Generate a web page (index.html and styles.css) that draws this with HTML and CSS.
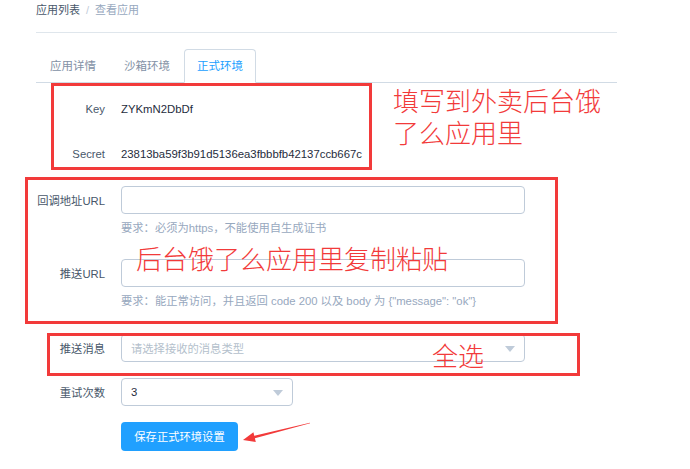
FILE: index.html
```html
<!DOCTYPE html>
<html lang="zh-CN">
<head>
<meta charset="utf-8">
<title>查看应用</title>
<link rel="stylesheet" href="styles.css">
</head>
<body>
<div class="page">
  <div class="breadcrumb">
    <span class="crumb-link">应用列表</span><span class="crumb-sep">/</span><span class="crumb-current">查看应用</span>
  </div>

  <div class="tabs">
    <div class="tab">应用详情</div>
    <div class="tab">沙箱环境</div>
    <div class="tab tab-active">正式环境</div>
  </div>

  <div class="form">
    <div class="item gap-17">
      <div class="label">Key</div>
      <div class="value">ZYKmN2DbDf</div>
    </div>
    <div class="item gap-18">
      <div class="label">Secret</div>
      <div class="value">23813ba59f3b91d5136ea3fbbbfb42137ccb667c</div>
    </div>
    <div class="item-wrap gap-23">
      <div class="item">
        <div class="label">回调地址URL</div>
        <div class="input wide"></div>
      </div>
      <div class="help">要求：必须为https，不能使用自生成证书</div>
    </div>
    <div class="item-wrap gap-24">
      <div class="item">
        <div class="label">推送URL</div>
        <div class="input wide"></div>
      </div>
      <div class="help">要求：能正常访问，并且返回 code 200 以及 body 为 {"message": "ok"}</div>
    </div>
    <div class="item gap-16">
      <div class="label">推送消息</div>
      <div class="input wide select"><span class="placeholder">请选择接收的消息类型</span><span class="caret"></span></div>
    </div>
    <div class="item gap-16">
      <div class="label">重试次数</div>
      <div class="input narrow select"><span class="select-value">3</span><span class="caret"></span></div>
    </div>
    <div class="item">
      <div class="label"></div>
      <button class="btn-primary">保存正式环境设置</button>
    </div>
  </div>
</div>

<div class="mark box-1"></div>
<div class="mark box-2"></div>
<div class="mark box-3"></div>
<div class="note note-1">填写到外卖后台饿<br>了么应用里</div>
<div class="note note-2">后台饿了么应用里复制粘贴</div>
<div class="note note-3">全选</div>
<svg class="arrow" width="75" height="30" viewBox="0 0 75 30">
  <polygon points="3,22 15.8,23.9 14.9,20.26 70.06,5.24 69.94,4.76 14.3,17.84 13.4,14.2" fill="#f23a3a"/>
</svg>
</body>
</html>
```

FILE: styles.css
```css
* { box-sizing: border-box; }

html, body {
  margin: 0;
  padding: 0;
  background: #fff;
}

body {
  width: 690px;
  height: 469px;
  position: relative;
  overflow: hidden;
  font-family: "Liberation Sans", "Noto Sans CJK SC", sans-serif;
  color: #1f2d3d;
}

.page {
  margin-left: 36px;
  width: 581px;
}

.breadcrumb {
  height: 33px;
  line-height: 20px;
  font-size: 11px;
  border-bottom: 1px solid #dfe6ec;
}

.crumb-link { color: #48576a; }
.crumb-sep { color: #bfcbd9; margin: 0 6px; }
.crumb-current { color: #97a8be; }

.tabs {
  margin-top: 16px;
  display: flex;
  height: 34px;
  border-bottom: 1px solid #d1dbe5;
}

.tab {
  height: 34px;
  margin-bottom: -1px;
  padding: 0 13px;
  line-height: 32px;
  font-size: 11.5px;
  color: #8391a5;
  border: 1px solid transparent;
  border-bottom: none;
}

.tab-active {
  color: #20a0ff;
  border: 1px solid #d1dbe5;
  border-bottom: 1px solid #fff;
  border-radius: 4px 4px 0 0;
  padding: 0 12px;
}

.form {
  margin-top: 12px;
  display: flex;
  flex-direction: column;
}

.item {
  display: flex;
  align-items: center;
  height: 28px;
}

.gap-16 { margin-bottom: 16px; }
.gap-17 { margin-bottom: 17px; }
.gap-18 { margin-bottom: 18px; }
.gap-23 { margin-bottom: 23px; }
.gap-24 { margin-bottom: 25px; }

.label {
  width: 85px;
  flex: none;
  padding-right: 16px;
  text-align: right;
  font-size: 11.3px;
  color: #48576a;
}

.value {
  font-size: 11.35px;
  color: #1f2d3d;
}

.input {
  height: 28px;
  border: 1px solid #bfcbd9;
  border-radius: 4px;
  background: #fff;
  position: relative;
  display: flex;
  align-items: center;
  padding-left: 9px;
  font-size: 11.3px;
}

.wide { width: 404px; }
.narrow { width: 172px; }

.select .placeholder { color: #b4bfcc; }
.select .select-value { color: #1f2d3d; }

.caret {
  position: absolute;
  right: 9px;
  top: 11px;
  width: 0;
  height: 0;
  border-left: 5px solid transparent;
  border-right: 5px solid transparent;
  border-top: 6px solid #bfcbd9;
}

.help {
  margin-top: 6px;
  margin-left: 85px;
  line-height: 16px;
  font-size: 11.3px;
  color: #97a8be;
}

.btn-primary {
  width: 117px;
  height: 29px;
  border: none;
  border-radius: 4px;
  background: #20a0ff;
  color: #fff;
  font-family: "Liberation Sans", "Noto Sans CJK SC", sans-serif;
  font-size: 11.3px;
  padding: 0;
}

/* annotation overlays */
.mark {
  position: absolute;
  border: 3px solid #f23a3a;
}

.box-1 { left: 51px; top: 83px; width: 321px; height: 87px; }
.box-2 { left: 25px; top: 177px; width: 533px; height: 147px; }
.box-3 { left: 47px; top: 333px; width: 533px; height: 43px; }

.note {
  position: absolute;
  font-family: "Noto Sans CJK SC", sans-serif;
  font-weight: 300;
  font-size: 26px;
  line-height: 32px;
  color: #f23a3a;
  white-space: nowrap;
}

.note-1 { left: 393px; top: 84px; }
.note-2 { left: 136px; top: 242px; }
.note-3 { left: 432px; top: 339px; }

.arrow {
  position: absolute;
  left: 240px;
  top: 418px;
}
```
